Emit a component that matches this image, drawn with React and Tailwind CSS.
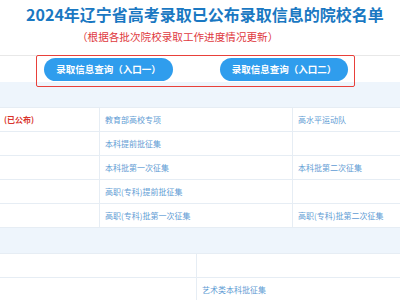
export default function App() {
  // rows of the admission table
  const rows = [
    { left: "(已公布)", mid: "教育部高校专项", right: "高水平运动队" },
    { left: "", mid: "本科提前批征集", right: "" },
    { left: "", mid: "本科批第一次征集", right: "本科批第二次征集" },
    { left: "", mid: "高职(专科)提前批征集", right: "" },
    { left: "", mid: "高职(专科)批第一次征集", right: "高职(专科)批第二次征集" },
  ];

  return (
    <div className="relative w-[400px] h-[300px] overflow-hidden bg-white font-['Noto_Sans_CJK_SC',sans-serif]">
      {/* Title */}
      <h1 className="pt-[4px] pl-[10px] text-center text-[16px] leading-[20px] font-bold text-[#1a78c2] whitespace-nowrap">
        2024年辽宁省高考录取已公布录取信息的院校名单
      </h1>
      <p className="mt-[6px] pl-[77px] text-[10.6px] leading-[14px] text-[#e0393e] whitespace-nowrap">
        （根据各批次院校录取工作进度情况更新）
      </p>

      {/* Query buttons */}
      <div className="mt-[11px] h-[27px] border-t border-[#e8e8e8] flex items-center pl-[44px] gap-[47px]">
        <button className="w-[129px] h-[23px] rounded-full bg-[#2f9ded] text-white text-[9.5px] font-bold">
          录取信息查询（入口一）
        </button>
        <button className="w-[128px] h-[23px] rounded-full bg-[#2f9ded] text-white text-[9.5px] font-bold">
          录取信息查询（入口二）
        </button>
      </div>

      <div className="h-[26px] bg-[#eef5fc] border-b border-[#e6edf4]" />

      {/* Table */}
      {rows.map((r, i) => (
        <div key={i} className="grid grid-cols-[100px_193px_1fr] h-[24px] border-b border-[#e6edf4] text-[8px] leading-[23px]">
          <div className="border-r border-[#e6edf4] pl-[4px] font-bold text-[#d9342b] whitespace-nowrap">{r.left}</div>
          <div className="border-r border-[#e6edf4] pl-[5px] text-[#5f9cd4] whitespace-nowrap">{r.mid}</div>
          <div className="pl-[5px] text-[#5f9cd4] whitespace-nowrap">{r.right}</div>
        </div>
      ))}

      <div className="h-[26px] bg-[#eef5fc] border-b border-[#e6edf4]" />

      <div className="grid grid-cols-[197px_1fr] h-[24px] border-b border-[#e6edf4]">
        <div className="border-r border-[#e6edf4]" />
        <div />
      </div>
      <div className="grid grid-cols-[197px_1fr] h-[24px] text-[8px] leading-[24px]">
        <div className="border-r border-[#e6edf4]" />
        <div className="pl-[5px] text-[#5f9cd4]">艺术类本科批征集</div>
      </div>

      {/* red highlight frame */}
      <div className="absolute left-[36px] top-[55px] w-[319px] h-[32px] border-[1.5px] border-[#e8403a] rounded-[2px]" />
    </div>
  );
}
